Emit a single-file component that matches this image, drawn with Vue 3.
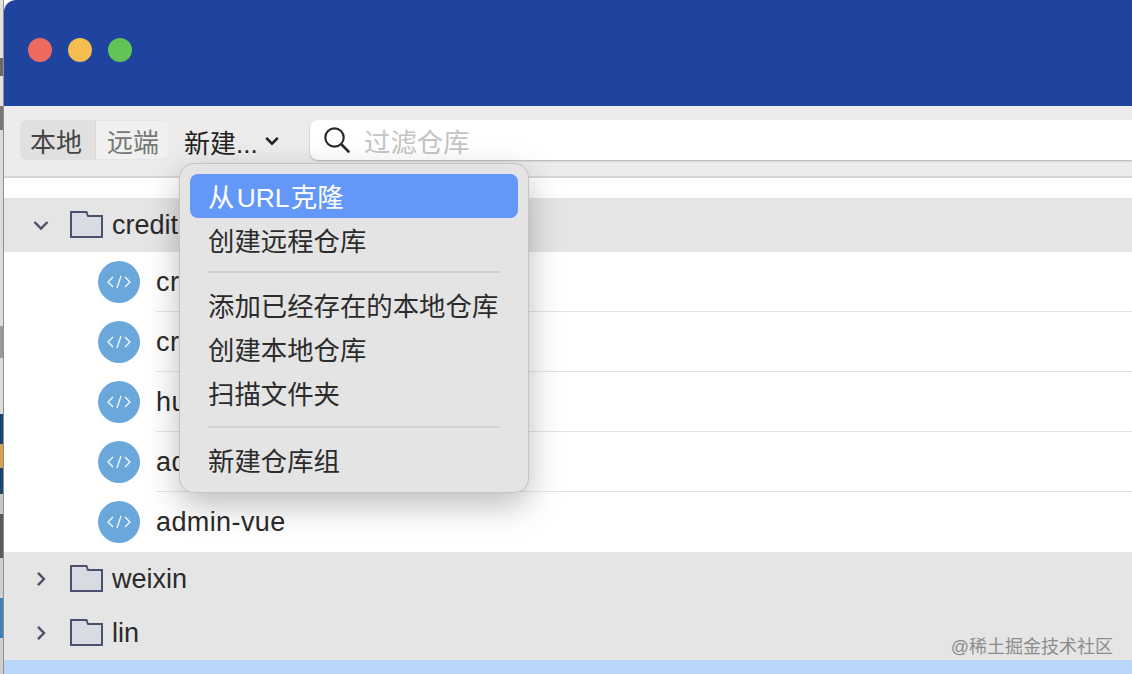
<template>
  <div class="page">
    <div class="desktop">
      <span v-for="(s, i) in strip" :key="i" :style="{ height: s[0] + 'px', backgroundColor: s[1] }"></span>
    </div>
    <div class="window">
      <header class="titlebar">
        <i class="dot red"></i>
        <i class="dot yellow"></i>
        <i class="dot green"></i>
      </header>

      <div class="toolbar">
        <div class="segment">
          <span class="seg active">本地</span>
          <span class="seg">远端</span>
        </div>
        <div class="new-btn">
          <span>新建...</span>
          <svg width="14" height="10" viewBox="0 0 14 10"><path d="M1.200 1.800 7 7.600l5.800-5.800" fill="none" stroke="#222" stroke-width="2.600" /></svg>
        </div>
        <div class="search">
          <svg width="26" height="26" viewBox="0 0 26 26"><circle cx="10.500" cy="10.500" r="9.200" fill="none" stroke="#2b2b2b" stroke-width="2.200" /><path d="m17.500 17.500 7 7" stroke="#2b2b2b" stroke-width="2.600" stroke-linecap="round" /></svg>
          <span>过滤仓库</span>
        </div>
      </div>

      <div class="list">
        <div class="spacer"></div>

        <div class="group">
          <svg class="chev" width="16" height="16" viewBox="0 0 16 16"><path d="M1.500 5 8 11.500 14.500 5" fill="none" stroke="#4b4f63" stroke-width="2.400" /></svg>
          <svg class="folder" width="33" height="27" viewBox="0 0 33 27"><path d="M1 26V1h15.500l1.500 4h14v21z" fill="#d9dbe2" stroke="#4b5070" stroke-width="2" /></svg>
          <span>credit</span>
        </div>
        <div v-for="(repo, i) in repos" :key="repo" class="repo">
          <div class="badge">
            <svg width="24" height="14" viewBox="0 0 24 14"><path d="M6 2 1 7l5 5M18 2l5 5-5 5M14 1l-4 12" fill="none" stroke="#fff" stroke-width="1.200" /></svg>
          </div>
          <span class="repo-name" :class="{ last: i === repos.length - 1 }">{{ repo }}</span>
        </div>
        <div v-for="g in groups" :key="g" class="group">
          <svg class="chev" width="16" height="16" viewBox="0 0 16 16"><path d="M5 1.800 11 8l-6 6.200" fill="none" stroke="#4b4f63" stroke-width="2.400" /></svg>
          <svg class="folder" width="33" height="27" viewBox="0 0 33 27"><path d="M1 26V1h15.500l1.500 4h14v21z" fill="#d9dbe2" stroke="#4b5070" stroke-width="2" /></svg>
          <span>{{ g }}</span>
        </div>
        <div class="selected"></div>
      </div>

      <div class="menu">
        <template v-for="(item, i) in menu" :key="i">
          <div v-if="item === '-'" class="sep"></div>
          <div v-else class="item" :class="{ hover: i === 0 }">{{ item }}</div>
        </template>
      </div>
    </div>
    <div class="mark">@稀土掘金技术社区</div>
  </div>
</template>

<script setup>
const repos = ['credit-admin', 'credit-api', 'huge-admin', 'admin-web', 'admin-vue']
const groups = ['weixin', 'lin']
const menu = ['从 URL 克隆', '创建远程仓库', '-', '添加已经存在的本地仓库', '创建本地仓库', '扫描文件夹', '-', '新建仓库组']
const strip = [
  [58, '#e2e2e2'],
  [18, '#6a6a6a'],
  [30, '#e2e2e2'],
  [24, '#777777'],
  [196, '#dcdcdc'],
  [32, '#9a9a9a'],
  [56, '#dcdcdc'],
  [30, '#1c4470'],
  [24, '#d8a24a'],
  [26, '#1c4470'],
  [20, '#c8c8c8'],
  [44, '#5a5a5a'],
  [40, '#cfcfcf'],
  [40, '#3f7fb8'],
  [36, '#cfcfcf']
]
</script>

<style>
html, body {
  margin: 0;
  background: #fff;
  overflow: hidden;
}
</style>

<style scoped>
.page {
  position: relative;
  display: flex;
  width: 1132px;
  height: 674px;
  overflow: hidden;
  font-family: "Liberation Sans", "Noto Sans CJK SC", sans-serif;
  color: #262626;
}

.desktop {
  width: 4px;
  flex: none;
  display: flex;
  flex-direction: column;
}

.desktop span {
  display: block;
  flex: none;
}

.window {
  position: relative;
  flex: 1;
  min-width: 0;
  display: flex;
  flex-direction: column;
  box-shadow: -1px 0 0 #8f8f8f;
}

.titlebar {
  height: 106px;
  flex: none;
  display: flex;
  align-items: center;
  gap: 16px;
  padding: 0 0 6px 24px;
  background: #1e44a0;
  border-top-left-radius: 12px;
  box-sizing: border-box;
}

.dot {
  width: 24px;
  height: 24px;
  border-radius: 50%;
}
.red { background: #ee6a5f; }
.yellow { background: #f5bd4f; }
.green { background: #61c454; }

.toolbar {
  height: 72px;
  flex: none;
  box-sizing: border-box;
  display: flex;
  align-items: center;
  padding: 0 0 2px 16px;
  background: #ececec;
  border-bottom: 2px solid #d6d6d6;
}

.segment {
  display: flex;
  height: 40px;
  border-radius: 8px;
  background: #f0f0f0;
  box-shadow: inset 0 0 0 1px #e6e6e6;
  overflow: hidden;
}

.seg {
  width: 74px;
  display: flex;
  align-items: center;
  justify-content: center;
  font-size: 26px;
  color: #777;
}

.seg.active {
  width: 76px;
  padding-right: 3px;
  background: #e0e0e0;
  color: #444;
  border-right: 1px solid #d8d8d8;
  box-sizing: border-box;
}

.new-btn {
  width: 140px;
  flex: none;
  display: flex;
  align-items: center;
  gap: 7px;
  padding: 2px 0 0 14px;
  box-sizing: border-box;
  font-size: 26px;
  color: #222;
}

.search {
  flex: 1;
  height: 40px;
  display: flex;
  align-items: center;
  gap: 14px;
  padding-left: 14px;
  background: #fff;
  border-radius: 8px 0 0 8px;
  box-shadow: 0 1px 2px rgba(0, 0, 0, 0.25);
  font-size: 26.400px;
  color: #c4c4c4;
}

.list {
  flex: 1;
  background: #fff;
}

.spacer {
  height: 20px;
}

.group {
  height: 54px;
  display: flex;
  align-items: center;
  background: #e5e5e5;
  font-size: 27px;
  color: #2b2b2b;
}

.chev {
  margin-left: 29px;
}

.folder {
  margin: 0 9px 2px 21px;
}

.repo {
  height: 60px;
  display: flex;
  align-items: center;
  padding-left: 94px;
}

.badge {
  width: 42px;
  height: 42px;
  flex: none;
  display: flex;
  align-items: center;
  justify-content: center;
  border-radius: 50%;
  background: #6aa8dc;
}

.repo-name {
  flex: 1;
  align-self: stretch;
  display: flex;
  align-items: center;
  margin-left: 16px;
  padding-top: 1px;
  font-size: 27px;
  letter-spacing: 0.4px;
  color: #2b2b2b;
  box-shadow: inset 0 -1px 0 #e4e4e4;
}

.repo-name.last {
  box-shadow: none;
}

.selected {
  height: 14px;
  background: #b9d6fb;
}

.menu {
  position: absolute;
  left: 176px;
  top: 164px;
  width: 348px;
  height: 328px;
  box-sizing: border-box;
  padding: 10px;
  background: #e4e4e4;
  border-radius: 14px;
  box-shadow: 0 0 0 1px #c4c4c4, 0 12px 34px rgba(0, 0, 0, 0.28);
  font-size: 26.400px;
  color: #2b2b2b;
}

.item {
  height: 44px;
  box-sizing: border-box;
  padding: 0 0 2px 18px;
  display: flex;
  align-items: center;
  border-radius: 8px;
  white-space: pre;
}

.item.hover {
  background: #6398f8;
  color: #fff;
  word-spacing: -5px;
}

.sep {
  height: 2px;
  margin: 9px 18px 10px;
  background: #d2d2d2;
}

.sep ~ .sep {
  margin-top: 11px;
}

.mark {
  position: absolute;
  right: 19px;
  top: 632px;
  font-size: 18px;
  color: #8c8c8c;
}
</style>
